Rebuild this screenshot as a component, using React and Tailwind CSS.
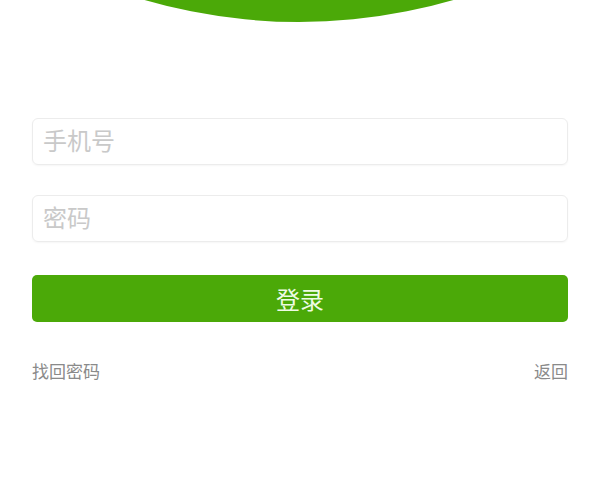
export default function App() {
  return (
    <div className="w-[600px] h-[500px] bg-white overflow-hidden" style={{ fontFamily: '"Noto Sans CJK SC", "Noto Sans", sans-serif' }}>
      {/* green arc header */}
      <div className="h-[22px] overflow-hidden flex justify-center items-end">
        <div className="w-[1106px] h-[1106px] shrink-0 rounded-full bg-[#4ba908] ml-[-2px]"></div>
      </div>

      <div className="px-8 pt-[96px]">
        <input
          type="text"
          placeholder="手机号"
          className="block w-full h-[47px] pl-[10px] pr-[10px] pb-[4px] rounded-[6px] border border-[#ececec] shadow-[0_1px_2px_rgba(0,0,0,0.04)] text-[24px] text-[#333] placeholder:text-[#c9c9c9] outline-none"
        />
        <input
          type="password"
          placeholder="密码"
          className="block w-full h-[47px] mt-[30px] pl-[10px] pr-[10px] pb-[4px] rounded-[6px] border border-[#ececec] shadow-[0_1px_2px_rgba(0,0,0,0.04)] text-[24px] text-[#333] placeholder:text-[#c9c9c9] outline-none"
        />
        <button className="block w-full h-[47px] mt-[33px] rounded-[5px] bg-[#4ba908] text-[24px] text-[#eefbe4] leading-none">
          登录
        </button>
        <div className="flex justify-between mt-[40px] text-[17px] text-[#8a8a8a] leading-none">
          <span>找回密码</span>
          <span>返回</span>
        </div>
      </div>
    </div>
  )
}
